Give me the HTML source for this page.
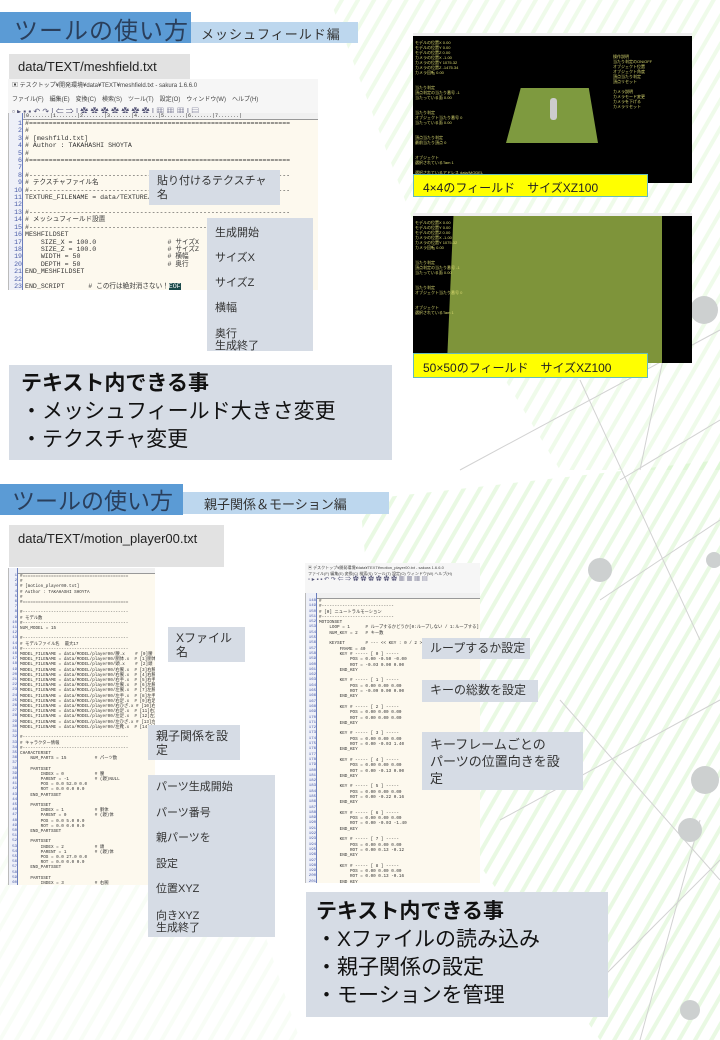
<!DOCTYPE html>
<html><head><meta charset="utf-8"><style>
*{margin:0;padding:0;box-sizing:border-box}
body{width:720px;height:1040px;position:relative;overflow:hidden;background:#fff;font-family:"Liberation Sans","Noto Sans CJK JP",sans-serif;color:#222}
.a{position:absolute}
.callout{position:absolute;background:#d6dce5;color:#333;font-size:11px;line-height:14px;padding:4px 8px;white-space:nowrap}
.ed{position:absolute;background:#fdf9ee;font-family:"Liberation Mono","Noto Sans CJK JP",monospace;color:#333;overflow:hidden;border-left:1px solid #bbb}
.ed pre{font-family:inherit;white-space:pre}
.gut{position:absolute;left:0;top:0;bottom:0;background:#eef0f8;border-right:1px solid #6a7dbc;color:#4a5ca8;text-align:right}
</style></head><body>
<svg class="a" style="left:0;top:0" width="720" height="1040">
<defs>
<pattern id="st" width="14" height="14" patternUnits="userSpaceOnUse" patternTransform="rotate(30)"><rect width="4" height="14" fill="#c8f0b8"/></pattern>
</defs>
<polygon points="330,0 720,0 720,470 560,470 420,240" fill="url(#st)" opacity="0.3"/>
<polygon points="360,500 720,460 720,1040 600,1040 380,720" fill="url(#st)" opacity="0.4"/>
<polygon points="0,1040 0,820 240,860 300,1040" fill="url(#st)" opacity="0.12"/>
<g stroke="#d2d2d2" stroke-width="1" fill="none">
<line x1="460" y1="470" x2="720" y2="330"/><line x1="580" y1="380" x2="700" y2="640"/>
<line x1="620" y1="480" x2="720" y2="420"/><line x1="500" y1="820" x2="720" y2="700"/>
<line x1="640" y1="1040" x2="700" y2="820"/><line x1="560" y1="700" x2="720" y2="880"/>
<line x1="580" y1="1000" x2="720" y2="860"/><line x1="600" y1="600" x2="720" y2="520"/>
<line x1="690" y1="230" x2="640" y2="470"/>
</g>
<g fill="#cdd0d0"><circle cx="704" cy="310" r="14"/><circle cx="600" cy="570" r="12"/><circle cx="705" cy="780" r="14"/><circle cx="690" cy="830" r="12"/><circle cx="690" cy="1010" r="10"/><circle cx="714" cy="560" r="8"/></g>
</svg>

<!-- Section 1 -->
<div class="a" style="left:0;top:12px;width:191px;height:31px;background:#5b9bd5"></div>
<div class="a" style="left:14px;top:11px;font-size:24px;color:#2a3f5c;letter-spacing:1px">ツールの使い方</div>
<div class="a" style="left:191px;top:22px;width:167px;height:21px;background:#bdd7ee;font-size:13px;padding:2px 0 0 10px;color:#333;letter-spacing:1px">メッシュフィールド編</div>
<div class="a" style="left:9px;top:54px;width:181px;height:25px;background:#e2e2e2;font-size:13px;padding:5px 0 0 9px">data/TEXT/meshfield.txt</div>

<div class="a" style="left:8px;top:79px;width:310px;height:40px;background:#f6f6f6;font-size:6px;color:#444">
<div style="padding:1px 4px">▣ テスクトップ¥開発環境¥data¥TEXT¥meshfield.txt - sakura 1.6.6.0</div>
<div style="padding:4px 4px 0">ファイル(F)　編集(E)　変換(C)　検索(S)　ツール(T)　設定(O)　ウィンドウ(W)　ヘルプ(H)</div>
<div style="padding:3px 4px 0;font-size:8px;color:#557">▫ ▸ ▪ ▪ ↶ ↷ | ⇐ ⇒ | ✿ ✿ ✿ ✿ ✿ ✿ ✿ | ▦ ▦ ▦ | ▤</div>
</div>
<div class="ed" style="left:8px;top:113px;width:310px;height:177px;font-size:6.6px;line-height:7.4px">
<div class="gut" style="width:14px;padding-top:7px"><pre>1
2
3
4
5
6
7
8
9
10
11
12
13
14
15
16
17
18
19
20
21
22
23</pre></div>
<div style="position:absolute;left:14px;top:0;right:0;height:7px;background:#f0f0f0;border-bottom:1px solid #999;font-size:5px;line-height:7px">|0.......|1.......|2.......|3.......|4.......|5.......|6.......|7.......|</div>
<pre style="position:absolute;left:16px;top:7px">#==================================================================
#
# [meshfild.txt]
# Author : TAKAHASHI SHOYTA
#
#==================================================================

#------------------------------------------------------------------
# テクスチャファイル名
#------------------------------------------------------------------
TEXTURE_FILENAME = data/TEXTURE/me

#------------------------------------------------------------------
# メッシュフィールド設置
#------------------------------------------------------------------
MESHFILDSET
    SIZE_X = 100.0                  # サイズX
    SIZE_Z = 100.0                  # サイズZ
    WIDTH = 50                      # 横幅
    DEPTH = 50                      # 奥行
END_MESHFILDSET

END_SCRIPT      # この行は絶対消さない！<span style="background:#1a4a4a;color:#fff">EOF</span></pre>
</div>
<div class="callout" style="left:149px;top:170px;width:131px;height:35px">貼り付けるテクスチャ<br>名</div>
<div class="callout" style="left:207px;top:218px;width:106px;height:133px;line-height:25px;padding-top:3px">生成開始<br>サイズX<br>サイズZ<br>横幅<br><span style="line-height:12px;display:inline-block;padding-top:7px">奥行<br>生成終了</span></div>

<!-- game screenshots -->
<div class="a" style="left:413px;top:33px;width:279px;height:150px;background:#000;border-top:3px solid #eee">
<div class="a" style="left:2px;top:4px;width:85px;font-size:4px;line-height:5px;color:#d8d870">モデルの位置X 0.00<br>モデルの位置Y 0.00<br>モデルの位置Z 0.00<br>カメラの位置X -1.00<br>カメラの位置Y 1075.32<br>カメラの位置Z -1475.34<br>カメラ回転 0.00<br><br><br>当たり判定<br>頂点判定の当たり番号 -1<br>当たっている面 0.00<br><br><br>当たり判定<br>オブジェクト当たり番号 0<br>当たっている面 0.00<br><br><br>頂点当たり判定<br>最前当たり頂点 0<br><br><br>オブジェクト<br>選択されているTam 1<br><br>選択されているアドレス data/MODEL</div>
<div class="a" style="left:200px;top:18px;width:75px;font-size:4px;line-height:5px;color:#d8d870">操作説明<br>当たり判定のON/OFF<br>オブジェクト位置<br>オブジェクト角度<br>頂点当たり判定<br>頂点リセット<br><br>カメラ説明<br>カメラモード変更<br>カメラを下げる<br>カメラリセット</div>
<div class="a" style="left:93px;top:52px;width:92px;height:55px;background:#7e9a3f;clip-path:polygon(16% 0,90% 0,100% 100%,0 100%)"></div>
<div class="a" style="left:137px;top:62px;width:7px;height:22px;background:#ccc;border-radius:3px"></div>
</div>
<div class="a" style="left:413px;top:174px;width:235px;height:23px;background:#ffff00;border:1px solid #6bb;font-size:12px;padding:4px 0 0 9px">4×4のフィールド　サイズXZ100</div>

<div class="a" style="left:413px;top:213px;width:279px;height:150px;background:#000;border-top:3px solid #eee">
<div class="a" style="left:34px;top:0;width:215px;height:147px;background:#7e943a;clip-path:polygon(3% 0,100% 0,100% 100%,0 100%)"></div>
<div class="a" style="left:2px;top:4px;width:85px;font-size:4px;line-height:5px;color:#d8d870">モデルの位置X 0.00<br>モデルの位置Y 0.00<br>モデルの位置Z 0.00<br>カメラの位置X -1.00<br>カメラの位置Y 1075.32<br>カメラ回転 0.00<br><br><br>当たり判定<br>頂点判定の当たり番号 -1<br>当たっている面 0.00<br><br><br>当たり判定<br>オブジェクト当たり番号 0<br><br><br>オブジェクト<br>選択されているTam 1</div>
</div>
<div class="a" style="left:413px;top:353px;width:235px;height:25px;background:#ffff00;border:1px solid #6bb;font-size:12px;padding:5px 0 0 9px">50×50のフィールド　サイズXZ100</div>

<div class="callout" style="left:9px;top:365px;width:383px;height:95px;padding:5px 0 0 12px;font-size:21px;line-height:28px;color:#111"><b style="font-size:21px">テキスト内できる事</b><br>・メッシュフィールド大きさ変更<br>・テクスチャ変更</div>

<!-- Section 2 -->
<div class="a" style="left:0;top:484px;width:183px;height:31px;background:#5b9bd5"></div>
<div class="a" style="left:12px;top:482px;font-size:23px;color:#2a3f5c">ツールの使い方</div>
<div class="a" style="left:183px;top:492px;width:206px;height:22px;background:#bdd7ee;font-size:13px;padding:2px 0 0 21px;color:#333">親子関係＆モーション編</div>
<div class="a" style="left:9px;top:525px;width:215px;height:42px;background:#e2e2e2;font-size:13px;padding:6px 0 0 9px">data/TEXT/motion_player00.txt</div>

<div class="ed" style="left:8px;top:568px;width:147px;height:317px;font-size:4.3px;line-height:5.2px">
<div class="gut" style="width:9px;padding-top:6px;font-size:4px"><pre>1
2
3
4
5
6
7
8
9
10
11
12
13
14
15
16
17
18
19
20
21
22
23
24
25
26
27
28
29
30
31
32
33
34
35
36
37
38
39
40
41
42
43
44
45
46
47
48
49
50
51
52
53
54
55
56
57
58
59
60</pre></div>
<div style="position:absolute;left:9px;top:0;right:0;height:6px;background:#f0f0f0;border-bottom:1px solid #999"></div>
<pre style="position:absolute;left:11px;top:6px">#=========================================
#
# [motion_player00.txt]
# Author : TAKAHASHI SHOYTA
#
#=========================================

#-----------------------------------------
# モデル数
#-----------------------------------------
NUM_MODEL = 15

#-----------------------------------------
# モデルファイル名  最大17
#-----------------------------------------
MODEL_FILENAME = data/MODEL/player00/腰.x    # [0]腰
MODEL_FILENAME = data/MODEL/player00/胴体.x  # [1]胴体
MODEL_FILENAME = data/MODEL/player00/頭.x    # [2]頭
MODEL_FILENAME = data/MODEL/player00/右腕.x  # [3]右腕
MODEL_FILENAME = data/MODEL/player00/右腕.x  # [4]右腕
MODEL_FILENAME = data/MODEL/player00/右手.x  # [5]右手
MODEL_FILENAME = data/MODEL/player00/左腕.x  # [6]左腕
MODEL_FILENAME = data/MODEL/player00/左腕.x  # [7]左腕
MODEL_FILENAME = data/MODEL/player00/左手.x  # [8]左手
MODEL_FILENAME = data/MODEL/player00/右足.x  # [9]右足
MODEL_FILENAME = data/MODEL/player00/右ひざ.x # [10]右ひざ
MODEL_FILENAME = data/MODEL/player00/右足.x  # [11]右足
MODEL_FILENAME = data/MODEL/player00/左足.x  # [12]左足
MODEL_FILENAME = data/MODEL/player00/左ひざ.x # [13]左ひざ
MODEL_FILENAME = data/MODEL/player00/左靴.x  # [14]左靴

#-----------------------------------------
# キャラクター情報
#-----------------------------------------
CHARACTERSET
    NUM_PARTS = 15           # パーツ数

    PARTSSET
        INDEX = 0            # 腰
        PARENT = -1          # (親)NULL
        POS = 0.0 52.0 0.0
        ROT = 0.0 0.0 0.0
    END_PARTSSET

    PARTSSET
        INDEX = 1            # 胴体
        PARENT = 0           # (親)体
        POS = 0.0 5.0 0.0
        ROT = 0.0 0.0 0.0
    END_PARTSSET

    PARTSSET
        INDEX = 2            # 頭
        PARENT = 1           # (親)体
        POS = 0.0 27.0 0.0
        ROT = 0.0 0.0 0.0
    END_PARTSSET

    PARTSSET
        INDEX = 3            # 右腕
        PARENT = 1           # (親)右上腕
        POS = -15.5 18.5 0.0
        ROT = 0.0 0.0 0.0
    END_PARTSSET</pre>
</div>
<div class="callout" style="left:168px;top:627px;width:77px;height:35px;font-size:12px">Xファイル<br>名</div>
<div class="callout" style="left:148px;top:725px;width:92px;height:35px;font-size:12px">親子関係を設<br>定</div>
<div class="callout" style="left:148px;top:775px;width:127px;height:162px;line-height:25.5px;padding-top:0;font-size:11px">パーツ生成開始<br>パーツ番号<br>親パーツを<br>設定<br>位置XYZ<br><span style="line-height:12px;display:inline-block;padding-top:7px">向きXYZ<br>生成終了</span></div>

<div class="a" style="left:305px;top:563px;width:175px;height:30px;background:#f6f6f6;font-size:4px;color:#444;line-height:6px;padding:2px 3px">▣ デスクトップ¥開発環境¥data¥TEXT¥motion_player00.txt - sakura 1.6.6.0<br>ファイル(F) 編集(E) 変換(C) 検索(S) ツール(T) 設定(O) ウィンドウ(W) ヘルプ(H)<br><span style="font-size:6px;color:#557">▫ ▸ ▪ ▪ ↶ ↷ ⇐ ⇒ ✿ ✿ ✿ ✿ ✿ ✿ ▦ ▦ ▦ ▤</span></div>
<div class="ed" style="left:305px;top:593px;width:175px;height:290px;font-size:4.3px;line-height:5.3px">
<div class="gut" style="width:11px;padding-top:6px;font-size:4px"><pre>148
149
150
151
152
153
154
155
156
157
158
159
160
161
162
163
164
165
166
167
168
169
170
171
172
173
174
175
176
177
178
179
180
181
182
183
184
185
186
187
188
189
190
191
192
193
194
195
196
197
198
199
200
201
202
203
204
205
206
207
208
209
210
211
212</pre></div>
<div style="position:absolute;left:11px;top:0;right:0;height:6px;background:#f0f0f0;border-bottom:1px solid #999"></div>
<pre style="position:absolute;left:13px;top:6px">#
#----------------------------
# [0] ニュートラルモーション
#----------------------------
MOTIONSET
    LOOP = 1      # ループするかどうか[0:ループしない / 1:ループする]
    NUM_KEY = 2   # キー数

    KEYSET        # --- << KEY : 0 / 2 >> ---
        FRAME = 40
        KEY # ----- [ 0 ] -----
            POS = 0.00 -0.50 -0.00
            ROT = -0.03 0.00 0.00
        END_KEY

        KEY # ----- [ 1 ] -----
            POS = 0.00 0.00 0.00
            ROT = -0.09 0.00 0.00
        END_KEY

        KEY # ----- [ 2 ] -----
            POS = 0.00 0.00 0.00
            ROT = 0.00 0.00 0.00
        END_KEY

        KEY # ----- [ 3 ] -----
            POS = 0.00 0.00 0.00
            ROT = 0.00 -0.03 1.40
        END_KEY

        KEY # ----- [ 4 ] -----
            POS = 0.00 0.00 0.00
            ROT = 0.00 -0.13 0.00
        END_KEY

        KEY # ----- [ 5 ] -----
            POS = 0.00 0.00 0.00
            ROT = 0.00 -0.22 0.16
        END_KEY

        KEY # ----- [ 6 ] -----
            POS = 0.00 0.00 0.00
            ROT = 0.00 -0.03 -1.40
        END_KEY

        KEY # ----- [ 7 ] -----
            POS = 0.00 0.00 0.00
            ROT = 0.00 0.13 -0.12
        END_KEY

        KEY # ----- [ 8 ] -----
            POS = 0.00 0.00 0.00
            ROT = 0.00 0.13 -0.16
        END_KEY

        KEY # ----- [ 9 ] -----
            POS = 0.00 0.00 0.00
            ROT = 0.13 0.00 -0.10
        END_KEY

        KEY # ----- [ 10 ] -----
            POS = 0.00 0.00 0.00
            ROT = -0.13 -0.03 0.06
        END_KEY
#</pre>
</div>
<div class="callout" style="left:422px;top:638px;width:108px;height:21px;font-size:12px;padding-top:3px">ループするか設定</div>
<div class="callout" style="left:422px;top:680px;width:116px;height:22px;font-size:12px;padding-top:3px">キーの総数を設定</div>
<div class="callout" style="left:422px;top:732px;width:161px;height:58px;font-size:13px;line-height:17px;padding-top:4px">キーフレームごとの<br>パーツの位置向きを設<br>定</div>

<div class="callout" style="left:306px;top:892px;width:302px;height:125px;padding:6px 0 0 10px;font-size:21px;line-height:28px;color:#111"><b>テキスト内できる事</b><br>・Xファイルの読み込み<br>・親子関係の設定<br>・モーションを管理</div>
</body></html>
